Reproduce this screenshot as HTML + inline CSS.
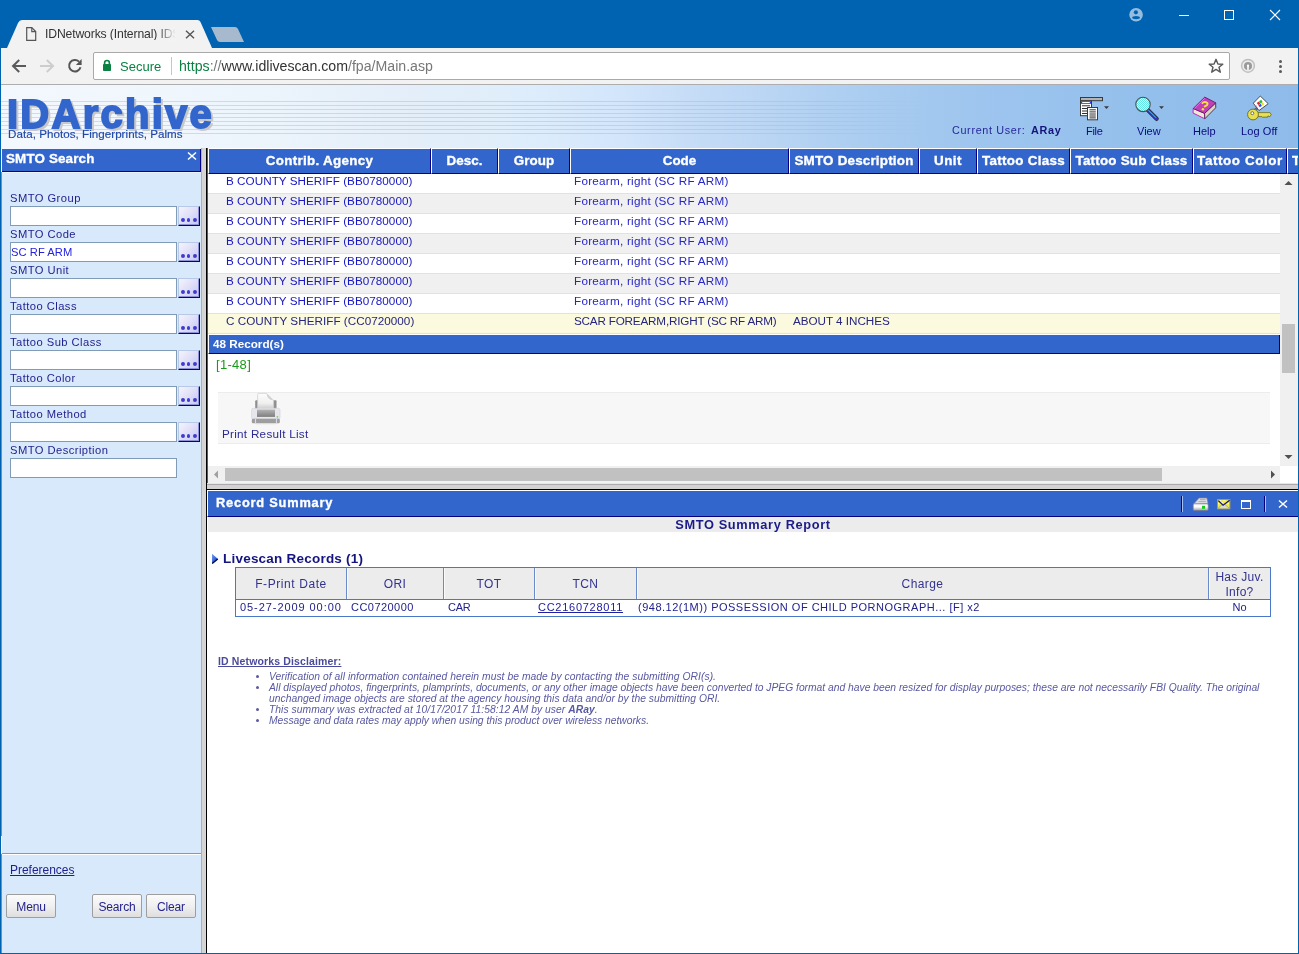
<!DOCTYPE html>
<html><head><meta charset="utf-8">
<style>
*{box-sizing:border-box;margin:0;padding:0}
html,body{width:1299px;height:954px;overflow:hidden;background:#fff;font-family:"Liberation Sans",sans-serif;position:relative}
.a{position:absolute}
.t{position:absolute;white-space:pre;line-height:1;will-change:transform}
svg{position:absolute;overflow:visible}
</style></head><body>
<div class="a" style="left:0px;top:0px;width:1299px;height:48px;background:#0063b1"></div>
<svg style="left:0;top:0" width="260" height="48">
<path d="M7 48 L18 23 Q19.5 20 22 20 L197.5 20 Q199.5 20 200.5 22 L212 48 Z" fill="#f2f2f2"/>
<path d="M211 27 L235 27 Q237 27 238 29 L244 42 L220 42 Q218 42 217 40 Z" fill="#a7b9cc"/>
</svg>
<svg style="left:24px;top:26px" width="16" height="17"><path d="M2.7 1.7 H7.8 L11.7 5.6 V14.3 H2.7 Z" fill="none" stroke="#555" stroke-width="1.2"/><path d="M7.8 1.7 V5.6 H11.7" fill="none" stroke="#555" stroke-width="1.2"/></svg>
<div class="t" style="left:45px;top:27.87px;font-size:12.2px;color:#333;font-weight:normal;font-style:normal;letter-spacing:-0.14px;width:132px;overflow:hidden;">IDNetworks (Internal) IDS</div>
<div class="a" style="left:157px;top:25px;width:22px;height:18px;background:linear-gradient(90deg,rgba(242,242,242,0),#f2f2f2 85%)"></div>
<svg style="left:185px;top:30px" width="10" height="9"><path d="M1 0.8 L9 8.2 M9 0.8 L1 8.2" stroke="#555" stroke-width="1.4"/></svg>
<svg style="left:1128px;top:7px" width="16" height="16"><circle cx="8.06" cy="7.8" r="6.8" fill="#95bde0"/><circle cx="7.9" cy="5.3" r="2.1" fill="#0063b1"/><ellipse cx="8.06" cy="10.6" rx="3.9" ry="1.6" fill="#0063b1"/></svg>
<div class="a" style="left:1179px;top:15px;width:10px;height:1px;background:#fff"></div>
<div class="a" style="left:1224px;top:10px;width:10px;height:10px;border:1px solid #fff"></div>
<svg style="left:1269px;top:9px" width="12" height="12"><path d="M1 1 L11 11 M11 1 L1 11" stroke="#fff" stroke-width="1.1"/></svg>
<div class="a" style="left:0px;top:48px;width:1299px;height:37px;background:#f2f2f2;border-bottom:1px solid #adadad"></div>
<div class="a" style="left:93px;top:52px;width:1137px;height:28px;background:#fff;border:1px solid #a9a9a9;border-radius:2px"></div>
<svg style="left:11px;top:58px" width="16" height="16"><path d="M15 8 H2.5 M8.2 2 L2 8 L8.2 14" fill="none" stroke="#5a5a5a" stroke-width="2"/></svg>
<svg style="left:39px;top:58px" width="16" height="16"><path d="M1 8 H13.5 M7.8 2 L14 8 L7.8 14" fill="none" stroke="#cdcdcd" stroke-width="2"/></svg>
<svg style="left:67px;top:58px" width="16" height="16"><path d="M13.5 9.3 A5.8 5.8 0 1 1 12 3.6" fill="none" stroke="#555" stroke-width="2"/><path d="M14.6 0.9 L14.6 6.9 L8.9 6.9 Z" fill="#555"/></svg>
<svg style="left:102px;top:59px" width="10" height="13"><path d="M2.6 5.5 V3.9 A2.4 2.4 0 0 1 7.4 3.9 V5.5" fill="none" stroke="#0b8043" stroke-width="1.6"/><rect x="1" y="5" width="8" height="7" rx="0.8" fill="#0b8043"/></svg>
<div class="t" style="left:120px;top:60.00px;font-size:13px;color:#0b8043;font-weight:normal;font-style:normal;">Secure</div>
<div class="a" style="left:171px;top:57px;width:1px;height:18px;background:#c6c6c6"></div>
<div class="t" style="left:179px;top:59.02px;font-size:14.15px;color:#333;font-weight:normal;font-style:normal;"><span style="color:#0b8043">https</span><span style="color:#777">://</span>www.idlivescan.com<span style="color:#777">/fpa/Main.asp</span></div>
<svg style="left:1208px;top:58px" width="16" height="16"><path d="M8 1.3 L9.9 6 L14.8 6.2 L11 9.3 L12.3 14.2 L8 11.4 L3.7 14.2 L5 9.3 L1.2 6.2 L6.1 6 Z" fill="none" stroke="#5a5a5a" stroke-width="1.4" stroke-linejoin="round"/></svg>
<svg style="left:1240px;top:58px" width="16" height="16"><circle cx="8" cy="7.85" r="6.4" fill="#ececec" stroke="#bdbdbd" stroke-width="1.4"/><circle cx="8" cy="7.9" r="4" fill="#9a9a9a"/><circle cx="8" cy="7.7" r="1.15" fill="#fff"/><rect x="7.2" y="7.7" width="1.6" height="4.2" fill="#fff"/></svg>
<div class="a" style="left:1279px;top:60px;width:3px;height:3px;border-radius:50%;background:#5a5a5a"></div>
<div class="a" style="left:1279px;top:65px;width:3px;height:3px;border-radius:50%;background:#5a5a5a"></div>
<div class="a" style="left:1279px;top:70px;width:3px;height:3px;border-radius:50%;background:#5a5a5a"></div>
<div class="a" style="left:1px;top:85px;width:1297px;height:64px;background:linear-gradient(90deg,#f3f8fd 0px,#edf5fc 250px,#e3eef9 420px,#e0eefb 500px,#dcecfc 540px,#d2e5fb 620px,#c4dbf6 704px,#a9ccf0 873px,#9cc4ee 1000px,#93bfec 1150px,#8ebbea 1297px)"></div>
<div class="a" style="left:1px;top:101px;width:950px;height:1px;background:linear-gradient(90deg,rgba(140,190,245,0.45) 0px,rgba(140,190,245,0.45) 820px,rgba(140,190,245,0.25) 880px,rgba(140,190,245,0) 930px)"></div>
<div class="a" style="left:1px;top:105px;width:950px;height:1px;background:linear-gradient(90deg,rgba(140,190,245,0.45) 0px,rgba(140,190,245,0.45) 820px,rgba(140,190,245,0.25) 880px,rgba(140,190,245,0) 930px)"></div>
<div class="a" style="left:1px;top:109px;width:950px;height:1px;background:linear-gradient(90deg,rgba(140,190,245,0.45) 0px,rgba(140,190,245,0.45) 820px,rgba(140,190,245,0.25) 880px,rgba(140,190,245,0) 930px)"></div>
<div class="a" style="left:1px;top:113px;width:950px;height:1px;background:linear-gradient(90deg,rgba(140,190,245,0.45) 0px,rgba(140,190,245,0.45) 820px,rgba(140,190,245,0.25) 880px,rgba(140,190,245,0) 930px)"></div>
<div class="a" style="left:1px;top:117px;width:950px;height:1px;background:linear-gradient(90deg,rgba(140,190,245,0.45) 0px,rgba(140,190,245,0.45) 820px,rgba(140,190,245,0.25) 880px,rgba(140,190,245,0) 930px)"></div>
<div class="a" style="left:1px;top:121px;width:950px;height:1px;background:linear-gradient(90deg,rgba(140,190,245,0.45) 0px,rgba(140,190,245,0.45) 820px,rgba(140,190,245,0.25) 880px,rgba(140,190,245,0) 930px)"></div>
<div class="a" style="left:1px;top:125px;width:950px;height:1px;background:linear-gradient(90deg,rgba(140,190,245,0.45) 0px,rgba(140,190,245,0.45) 820px,rgba(140,190,245,0.25) 880px,rgba(140,190,245,0) 930px)"></div>
<div class="a" style="left:1px;top:129px;width:950px;height:1px;background:linear-gradient(90deg,rgba(140,190,245,0.45) 0px,rgba(140,190,245,0.45) 820px,rgba(140,190,245,0.25) 880px,rgba(140,190,245,0) 930px)"></div>
<div class="a" style="left:1px;top:133px;width:950px;height:1px;background:linear-gradient(90deg,rgba(140,190,245,0.45) 0px,rgba(140,190,245,0.45) 820px,rgba(140,190,245,0.25) 880px,rgba(140,190,245,0) 930px)"></div>
<div class="t" style="left:9.2px;top:95.84px;font-size:40px;color:#c8c8c8;font-weight:bold;font-style:normal;letter-spacing:2.25px;-webkit-text-stroke:1.8px #c8c8c8;">IDArchive</div>
<div class="t" style="left:7.2px;top:93.84px;font-size:40px;color:#3366cc;font-weight:bold;font-style:normal;letter-spacing:2.25px;-webkit-text-stroke:1.8px #3366cc;">IDArchive</div>
<div class="t" style="left:8px;top:128.08px;font-size:11.6px;color:#2048a8;font-weight:normal;font-style:normal;letter-spacing:0.04px;-webkit-text-stroke:0.15px #2048a8;">Data, Photos, Fingerprints, Palms</div>
<div class="t" style="left:951.8px;top:125.26px;font-size:10.8px;color:#26269a;font-weight:normal;font-style:normal;letter-spacing:0.66px;">Current User:</div>
<div class="t" style="left:1030.8px;top:125.26px;font-size:10.8px;color:#14147a;font-weight:bold;font-style:normal;letter-spacing:0.7px;">ARay</div>
<div class="t" style="left:1085.5px;top:126.09px;font-size:11px;color:#0a0a80;font-weight:normal;font-style:normal;letter-spacing:-0.3px;">File</div>
<div class="t" style="left:1137.2px;top:126.09px;font-size:11px;color:#0a0a80;font-weight:normal;font-style:normal;">View</div>
<div class="t" style="left:1192.6px;top:126.09px;font-size:11px;color:#0a0a80;font-weight:normal;font-style:normal;">Help</div>
<div class="t" style="left:1240.6px;top:126.09px;font-size:11px;color:#0a0a80;font-weight:normal;font-style:normal;letter-spacing:0.09px;">Log Off</div>
<svg style="left:1080px;top:96px" width="30" height="28">
<rect x="0.5" y="1.5" width="22" height="3.2" fill="#b4b4b4" stroke="#3a3a3a" stroke-width="1"/>
<rect x="0.5" y="4.7" width="11" height="15" fill="#fff" stroke="#3a3a3a" stroke-width="1"/>
<rect x="1" y="5.2" width="10" height="2.6" fill="#3434f0"/>
<rect x="2.2" y="6" width="7.6" height="1" fill="#fff"/>
<path d="M2 9.8 H10 M2 12.5 H10 M2 15 H10 M2 17.5 H10" stroke="#303030" stroke-width="1"/>
<rect x="7.5" y="11.5" width="10" height="12.3" fill="#fff" stroke="#3a3a3a" stroke-width="1"/>
<path d="M9.5 13.8 H15.8 M9.5 15.9 H15.8 M9.5 18 H15.8 M9.5 20 H15.8 M9.5 21.9 H15.8" stroke="#303030" stroke-width="1"/>
<path d="M24 10.3 L29 10.3 L26.5 12.9 Z" fill="#3a3a3a"/>
</svg><svg style="left:1134px;top:96px" width="32" height="28">
<defs><pattern id="chk" width="2" height="2" patternUnits="userSpaceOnUse"><rect width="2" height="2" fill="#e8ffff"/><rect width="1" height="1" fill="#60e8e8"/><rect x="1" y="1" width="1" height="1" fill="#60e8e8"/></pattern></defs>
<path d="M13.6 13.8 L22.6 22.8" stroke="#303048" stroke-width="4.4" stroke-linecap="round"/>
<path d="M13.6 13.8 L22.6 22.8" stroke="#3434e0" stroke-width="2.4" stroke-linecap="round"/>
<path d="M14.5 14.2 L22 21.7" stroke="#40e0f0" stroke-width="0.9"/>
<circle cx="9" cy="8.4" r="7.2" fill="url(#chk)" stroke="#505050" stroke-width="1.1"/>
<path d="M25.1 10.3 L29.9 10.3 L27.5 12.9 Z" fill="#3a3a3a"/>
</svg><svg style="left:1192px;top:96px" width="26" height="25">
<path d="M1.2 12.5 L12.6 17.4 L12.8 22.8 L1 17 Z" fill="#ecead4" stroke="#d020c0" stroke-width="1"/>
<path d="M12.6 17.4 L23.7 6.8 L23.7 11.8 L12.8 22.8 Z" fill="#d8d6c0" stroke="#502050" stroke-width="0.9"/>
<path d="M1.2 12.5 L12.75 1.1 L23.7 6.8 L12.6 17.4 Z" fill="#c040b8" stroke="#6a1a6a" stroke-width="0.9"/>
<path d="M2.5 12.3 L12.75 2.2" stroke="#f070f0" stroke-width="1"/>
<path d="M9.8 7.6 Q12.5 4.8 15.3 7 Q16.3 8.8 13.3 10.2 L12.1 11" fill="none" stroke="#f4e040" stroke-width="1.9"/>
<circle cx="10.9" cy="13.2" r="1.2" fill="#f4e040"/>
</svg><svg style="left:1247px;top:95px" width="26" height="28">
<path d="M13.3 1 L21.2 8.7 L12 15.6 L6.3 8.2 Z" fill="#fff" stroke="#404040" stroke-width="0.9"/>
<g transform="rotate(-35 13.5 8.6)"><rect x="10.8" y="5.9" width="2.6" height="2.6" fill="#e02828"/><rect x="13.6" y="5.9" width="2.6" height="2.6" fill="#20c040"/><rect x="10.8" y="8.7" width="2.6" height="2.6" fill="#2850f0"/><rect x="13.6" y="8.7" width="2.6" height="2.6" fill="#f0e020"/></g>
<path d="M8 12 L9.5 11 M8.6 13 L10 12" stroke="#e03030" stroke-width="0.8"/><path d="M8.8 13.6 L10.3 12.6" stroke="#3050f0" stroke-width="0.8"/>
<path d="M6.5 14.8 Q8.5 12.8 10.5 14.5" fill="none" stroke="#404040" stroke-width="1"/>
<path d="M10.8 17.6 H23 L24.2 19.6 L23 21.6 H22 L21 20.8 L20 22.8 L19 21.6 L18 22.8 L17 21.6 L16 22.8 L15 21.6 H10.8 Z" fill="#e8e050" stroke="#6a6a20" stroke-width="0.8"/>
<circle cx="6" cy="19.5" r="5.4" fill="#e8e050" stroke="#6a6a20" stroke-width="0.9"/>
<circle cx="5.3" cy="18.2" r="1.5" fill="#fff" stroke="#404040" stroke-width="0.7"/>
</svg><div class="a" style="left:1px;top:149px;width:200px;height:804px;background:#d9e9fc"></div>
<div class="a" style="left:1px;top:172px;width:1px;height:664px;background:#8a8a8a"></div>
<div class="a" style="left:1px;top:149px;width:1px;height:23px;background:#ffffff"></div>
<div class="a" style="left:1px;top:836px;width:1px;height:17px;background:#ffffff"></div>
<div class="a" style="left:1px;top:854px;width:1px;height:99px;background:#8a8a8a"></div>
<div class="a" style="left:2px;top:149px;width:199px;height:23px;background:#3366cc;border-right:1px solid #000080;border-bottom:1px solid #000080"></div>
<div class="t" style="left:5.5px;top:151.66px;font-size:13.4px;color:#fff;font-weight:bold;font-style:normal;letter-spacing:0.15px;-webkit-text-stroke:0.35px #fff;">SMTO Search</div>
<svg style="left:187px;top:152px" width="10" height="8"><path d="M1 0.5 L9 7.5 M9 0.5 L1 7.5" stroke="#fff" stroke-width="1.6"/></svg>
<div class="t" style="left:10.2px;top:192.52px;font-size:11.2px;color:#1e1e8c;font-weight:normal;font-style:normal;letter-spacing:0.45px;">SMTO Group</div>
<div class="a" style="left:10px;top:206px;width:167px;height:20px;background:#fff;border:1px solid #7f9db9"></div>
<div class="a" style="left:178px;top:206px;width:22px;height:20px;background:linear-gradient(135deg,#f4f4fc 0%,#dedef8 50%,#c4c4f2 100%);border-right:1px solid #00009a;border-bottom:1px solid #00009a;border-top:1px solid #b8c8e8;border-left:1px solid #b8c8e8;box-shadow:inset -1px -1px 0 #9090d8"></div>
<div class="a" style="left:180.9px;top:217.9px;width:3.8px;height:3.8px;border-radius:50%;background:radial-gradient(circle at 35% 35%,#3c3cd0 50%,#5a5a9a 100%)"></div>
<div class="a" style="left:186.6px;top:217.9px;width:3.8px;height:3.8px;border-radius:50%;background:radial-gradient(circle at 35% 35%,#3c3cd0 50%,#5a5a9a 100%)"></div>
<div class="a" style="left:192.9px;top:217.9px;width:3.8px;height:3.8px;border-radius:50%;background:radial-gradient(circle at 35% 35%,#3c3cd0 50%,#5a5a9a 100%)"></div>
<div class="t" style="left:10.2px;top:228.52px;font-size:11.2px;color:#1e1e8c;font-weight:normal;font-style:normal;letter-spacing:0.45px;">SMTO Code</div>
<div class="a" style="left:10px;top:242px;width:167px;height:20px;background:#fff;border:1px solid #7f9db9"></div>
<div class="a" style="left:178px;top:242px;width:22px;height:20px;background:linear-gradient(135deg,#f4f4fc 0%,#dedef8 50%,#c4c4f2 100%);border-right:1px solid #00009a;border-bottom:1px solid #00009a;border-top:1px solid #b8c8e8;border-left:1px solid #b8c8e8;box-shadow:inset -1px -1px 0 #9090d8"></div>
<div class="a" style="left:180.9px;top:253.9px;width:3.8px;height:3.8px;border-radius:50%;background:radial-gradient(circle at 35% 35%,#3c3cd0 50%,#5a5a9a 100%)"></div>
<div class="a" style="left:186.6px;top:253.9px;width:3.8px;height:3.8px;border-radius:50%;background:radial-gradient(circle at 35% 35%,#3c3cd0 50%,#5a5a9a 100%)"></div>
<div class="a" style="left:192.9px;top:253.9px;width:3.8px;height:3.8px;border-radius:50%;background:radial-gradient(circle at 35% 35%,#3c3cd0 50%,#5a5a9a 100%)"></div>
<div class="t" style="left:10.2px;top:264.52px;font-size:11.2px;color:#1e1e8c;font-weight:normal;font-style:normal;letter-spacing:0.45px;">SMTO Unit</div>
<div class="a" style="left:10px;top:278px;width:167px;height:20px;background:#fff;border:1px solid #7f9db9"></div>
<div class="a" style="left:178px;top:278px;width:22px;height:20px;background:linear-gradient(135deg,#f4f4fc 0%,#dedef8 50%,#c4c4f2 100%);border-right:1px solid #00009a;border-bottom:1px solid #00009a;border-top:1px solid #b8c8e8;border-left:1px solid #b8c8e8;box-shadow:inset -1px -1px 0 #9090d8"></div>
<div class="a" style="left:180.9px;top:289.9px;width:3.8px;height:3.8px;border-radius:50%;background:radial-gradient(circle at 35% 35%,#3c3cd0 50%,#5a5a9a 100%)"></div>
<div class="a" style="left:186.6px;top:289.9px;width:3.8px;height:3.8px;border-radius:50%;background:radial-gradient(circle at 35% 35%,#3c3cd0 50%,#5a5a9a 100%)"></div>
<div class="a" style="left:192.9px;top:289.9px;width:3.8px;height:3.8px;border-radius:50%;background:radial-gradient(circle at 35% 35%,#3c3cd0 50%,#5a5a9a 100%)"></div>
<div class="t" style="left:10.2px;top:300.52px;font-size:11.2px;color:#1e1e8c;font-weight:normal;font-style:normal;letter-spacing:0.45px;">Tattoo Class</div>
<div class="a" style="left:10px;top:314px;width:167px;height:20px;background:#fff;border:1px solid #7f9db9"></div>
<div class="a" style="left:178px;top:314px;width:22px;height:20px;background:linear-gradient(135deg,#f4f4fc 0%,#dedef8 50%,#c4c4f2 100%);border-right:1px solid #00009a;border-bottom:1px solid #00009a;border-top:1px solid #b8c8e8;border-left:1px solid #b8c8e8;box-shadow:inset -1px -1px 0 #9090d8"></div>
<div class="a" style="left:180.9px;top:325.9px;width:3.8px;height:3.8px;border-radius:50%;background:radial-gradient(circle at 35% 35%,#3c3cd0 50%,#5a5a9a 100%)"></div>
<div class="a" style="left:186.6px;top:325.9px;width:3.8px;height:3.8px;border-radius:50%;background:radial-gradient(circle at 35% 35%,#3c3cd0 50%,#5a5a9a 100%)"></div>
<div class="a" style="left:192.9px;top:325.9px;width:3.8px;height:3.8px;border-radius:50%;background:radial-gradient(circle at 35% 35%,#3c3cd0 50%,#5a5a9a 100%)"></div>
<div class="t" style="left:10.2px;top:336.52px;font-size:11.2px;color:#1e1e8c;font-weight:normal;font-style:normal;letter-spacing:0.45px;">Tattoo Sub Class</div>
<div class="a" style="left:10px;top:350px;width:167px;height:20px;background:#fff;border:1px solid #7f9db9"></div>
<div class="a" style="left:178px;top:350px;width:22px;height:20px;background:linear-gradient(135deg,#f4f4fc 0%,#dedef8 50%,#c4c4f2 100%);border-right:1px solid #00009a;border-bottom:1px solid #00009a;border-top:1px solid #b8c8e8;border-left:1px solid #b8c8e8;box-shadow:inset -1px -1px 0 #9090d8"></div>
<div class="a" style="left:180.9px;top:361.9px;width:3.8px;height:3.8px;border-radius:50%;background:radial-gradient(circle at 35% 35%,#3c3cd0 50%,#5a5a9a 100%)"></div>
<div class="a" style="left:186.6px;top:361.9px;width:3.8px;height:3.8px;border-radius:50%;background:radial-gradient(circle at 35% 35%,#3c3cd0 50%,#5a5a9a 100%)"></div>
<div class="a" style="left:192.9px;top:361.9px;width:3.8px;height:3.8px;border-radius:50%;background:radial-gradient(circle at 35% 35%,#3c3cd0 50%,#5a5a9a 100%)"></div>
<div class="t" style="left:10.2px;top:372.52px;font-size:11.2px;color:#1e1e8c;font-weight:normal;font-style:normal;letter-spacing:0.45px;">Tattoo Color</div>
<div class="a" style="left:10px;top:386px;width:167px;height:20px;background:#fff;border:1px solid #7f9db9"></div>
<div class="a" style="left:178px;top:386px;width:22px;height:20px;background:linear-gradient(135deg,#f4f4fc 0%,#dedef8 50%,#c4c4f2 100%);border-right:1px solid #00009a;border-bottom:1px solid #00009a;border-top:1px solid #b8c8e8;border-left:1px solid #b8c8e8;box-shadow:inset -1px -1px 0 #9090d8"></div>
<div class="a" style="left:180.9px;top:397.9px;width:3.8px;height:3.8px;border-radius:50%;background:radial-gradient(circle at 35% 35%,#3c3cd0 50%,#5a5a9a 100%)"></div>
<div class="a" style="left:186.6px;top:397.9px;width:3.8px;height:3.8px;border-radius:50%;background:radial-gradient(circle at 35% 35%,#3c3cd0 50%,#5a5a9a 100%)"></div>
<div class="a" style="left:192.9px;top:397.9px;width:3.8px;height:3.8px;border-radius:50%;background:radial-gradient(circle at 35% 35%,#3c3cd0 50%,#5a5a9a 100%)"></div>
<div class="t" style="left:10.2px;top:408.52px;font-size:11.2px;color:#1e1e8c;font-weight:normal;font-style:normal;letter-spacing:0.45px;">Tattoo Method</div>
<div class="a" style="left:10px;top:422px;width:167px;height:20px;background:#fff;border:1px solid #7f9db9"></div>
<div class="a" style="left:178px;top:422px;width:22px;height:20px;background:linear-gradient(135deg,#f4f4fc 0%,#dedef8 50%,#c4c4f2 100%);border-right:1px solid #00009a;border-bottom:1px solid #00009a;border-top:1px solid #b8c8e8;border-left:1px solid #b8c8e8;box-shadow:inset -1px -1px 0 #9090d8"></div>
<div class="a" style="left:180.9px;top:433.9px;width:3.8px;height:3.8px;border-radius:50%;background:radial-gradient(circle at 35% 35%,#3c3cd0 50%,#5a5a9a 100%)"></div>
<div class="a" style="left:186.6px;top:433.9px;width:3.8px;height:3.8px;border-radius:50%;background:radial-gradient(circle at 35% 35%,#3c3cd0 50%,#5a5a9a 100%)"></div>
<div class="a" style="left:192.9px;top:433.9px;width:3.8px;height:3.8px;border-radius:50%;background:radial-gradient(circle at 35% 35%,#3c3cd0 50%,#5a5a9a 100%)"></div>
<div class="t" style="left:10.2px;top:444.52px;font-size:11.2px;color:#1e1e8c;font-weight:normal;font-style:normal;letter-spacing:0.45px;">SMTO Description</div>
<div class="a" style="left:10px;top:458px;width:167px;height:20px;background:#fff;border:1px solid #7f9db9"></div>
<div class="t" style="left:11.3px;top:247.22px;font-size:11.2px;color:#2424dc;font-weight:normal;font-style:normal;letter-spacing:0.05px;">SC RF ARM</div>
<div class="a" style="left:2px;top:853px;width:199px;height:1px;background:#6b9fd6"></div>
<div class="a" style="left:2px;top:854px;width:199px;height:1px;background:#ffffff"></div>
<div class="t" style="left:10px;top:864.14px;font-size:12px;color:#1e1e8c;font-weight:normal;font-style:normal;letter-spacing:-0.03px;text-decoration:underline;">Preferences</div>
<div class="a" style="left:6px;top:894px;width:50px;height:24px;background:linear-gradient(180deg,#fbfbfb 0%,#f0f0f0 50%,#dedede 100%);border:1px solid #9e9e9e;border-radius:2px"></div>
<div class="t" style="left:6px;width:50px;text-align:center;top:900.94px;font-size:12px;color:#23238c;font-weight:normal;font-style:normal;letter-spacing:-0.18px;">Menu</div>
<div class="a" style="left:92px;top:894px;width:50px;height:24px;background:linear-gradient(180deg,#fbfbfb 0%,#f0f0f0 50%,#dedede 100%);border:1px solid #9e9e9e;border-radius:2px"></div>
<div class="t" style="left:92px;width:50px;text-align:center;top:900.94px;font-size:12px;color:#23238c;font-weight:normal;font-style:normal;letter-spacing:-0.18px;">Search</div>
<div class="a" style="left:146px;top:894px;width:50px;height:24px;background:linear-gradient(180deg,#fbfbfb 0%,#f0f0f0 50%,#dedede 100%);border:1px solid #9e9e9e;border-radius:2px"></div>
<div class="t" style="left:146px;width:50px;text-align:center;top:900.94px;font-size:12px;color:#23238c;font-weight:normal;font-style:normal;letter-spacing:-0.18px;">Clear</div>
<div class="a" style="left:201px;top:148px;width:5px;height:805px;background:linear-gradient(90deg,#b0b0b0 0,#b0b0b0 1px,#d4d4d4 1px,#d4d4d4 4px,#dadada 5px)"></div>
<div class="a" style="left:206px;top:148px;width:1px;height:805px;background:#000"></div>
<div class="a" style="left:2px;top:172px;width:199px;height:1px;background:#edf3fc"></div>
<div class="a" style="left:208px;top:148px;width:1090px;height:341px;background:#fff"></div>
<div class="a" style="left:207px;top:148px;width:1px;height:341px;background:#5a5a5a"></div>
<div class="a" style="left:208px;top:148px;width:1090px;height:1px;background:#fff"></div>
<div class="a" style="left:208px;top:148px;width:223px;height:26px;background:#3366cc;border-left:1px solid #fff;border-top:1px solid #fff;border-right:1px solid #000080;border-bottom:1px solid #000080"></div>
<div class="t" style="left:209px;width:221px;text-align:center;top:153.66px;font-size:13.4px;color:#fff;font-weight:bold;font-style:normal;letter-spacing:0.3px;-webkit-text-stroke:0.35px #fff;">Contrib. Agency</div>
<div class="a" style="left:431px;top:148px;width:67px;height:26px;background:#3366cc;border-left:1px solid #fff;border-top:1px solid #fff;border-right:1px solid #000080;border-bottom:1px solid #000080"></div>
<div class="t" style="left:432px;width:65px;text-align:center;top:153.66px;font-size:13.4px;color:#fff;font-weight:bold;font-style:normal;letter-spacing:0.07px;-webkit-text-stroke:0.35px #fff;">Desc.</div>
<div class="a" style="left:498px;top:148px;width:72px;height:26px;background:#3366cc;border-left:1px solid #fff;border-top:1px solid #fff;border-right:1px solid #000080;border-bottom:1px solid #000080"></div>
<div class="t" style="left:499px;width:70px;text-align:center;top:153.66px;font-size:13.4px;color:#fff;font-weight:bold;font-style:normal;letter-spacing:0.09px;-webkit-text-stroke:0.35px #fff;">Group</div>
<div class="a" style="left:570px;top:148px;width:219px;height:26px;background:#3366cc;border-left:1px solid #fff;border-top:1px solid #fff;border-right:1px solid #000080;border-bottom:1px solid #000080"></div>
<div class="t" style="left:571px;width:217px;text-align:center;top:153.66px;font-size:13.4px;color:#fff;font-weight:bold;font-style:normal;-webkit-text-stroke:0.35px #fff;">Code</div>
<div class="a" style="left:789px;top:148px;width:130px;height:26px;background:#3366cc;border-left:1px solid #fff;border-top:1px solid #fff;border-right:1px solid #000080;border-bottom:1px solid #000080"></div>
<div class="t" style="left:790px;width:128px;text-align:center;top:153.66px;font-size:13.4px;color:#fff;font-weight:bold;font-style:normal;letter-spacing:0.2px;-webkit-text-stroke:0.35px #fff;">SMTO Description</div>
<div class="a" style="left:919px;top:148px;width:58px;height:26px;background:#3366cc;border-left:1px solid #fff;border-top:1px solid #fff;border-right:1px solid #000080;border-bottom:1px solid #000080"></div>
<div class="t" style="left:920px;width:56px;text-align:center;top:153.66px;font-size:13.4px;color:#fff;font-weight:bold;font-style:normal;letter-spacing:0.47px;-webkit-text-stroke:0.35px #fff;">Unit</div>
<div class="a" style="left:977px;top:148px;width:93px;height:26px;background:#3366cc;border-left:1px solid #fff;border-top:1px solid #fff;border-right:1px solid #000080;border-bottom:1px solid #000080"></div>
<div class="t" style="left:978px;width:91px;text-align:center;top:153.66px;font-size:13.4px;color:#fff;font-weight:bold;font-style:normal;letter-spacing:0.3px;-webkit-text-stroke:0.35px #fff;">Tattoo Class</div>
<div class="a" style="left:1070px;top:148px;width:123px;height:26px;background:#3366cc;border-left:1px solid #fff;border-top:1px solid #fff;border-right:1px solid #000080;border-bottom:1px solid #000080"></div>
<div class="t" style="left:1071px;width:121px;text-align:center;top:153.66px;font-size:13.4px;color:#fff;font-weight:bold;font-style:normal;letter-spacing:0.23px;-webkit-text-stroke:0.35px #fff;">Tattoo Sub Class</div>
<div class="a" style="left:1193px;top:148px;width:94px;height:26px;background:#3366cc;border-left:1px solid #fff;border-top:1px solid #fff;border-right:1px solid #000080;border-bottom:1px solid #000080"></div>
<div class="t" style="left:1194px;width:92px;text-align:center;top:153.66px;font-size:13.4px;color:#fff;font-weight:bold;font-style:normal;letter-spacing:0.6px;-webkit-text-stroke:0.35px #fff;">Tattoo Color</div>
<div class="a" style="left:1287px;top:148px;width:11px;height:26px;background:#3366cc;border-left:1px solid #fff;border-top:1px solid #fff;border-bottom:1px solid #000080"></div>
<div class="t" style="left:1292px;top:153.66px;font-size:13.4px;color:#fff;font-weight:bold;font-style:normal;width:6px;overflow:hidden;-webkit-text-stroke:0.35px #fff;">T</div>
<div class="a" style="left:208px;top:174px;width:1072px;height:19px;background:#ffffff"></div>
<div class="a" style="left:208px;top:193px;width:1072px;height:1px;background:#dedefa"></div>
<div class="t" style="left:226.3px;top:175.10px;font-size:11.7px;color:#1818c0;font-weight:normal;font-style:normal;letter-spacing:0.03px;">B COUNTY SHERIFF (BB0780000)</div>
<div class="t" style="left:574px;top:175.10px;font-size:11.7px;color:#2626c8;font-weight:normal;font-style:normal;letter-spacing:0.25px;">Forearm, right (SC RF ARM)</div>
<div class="a" style="left:208px;top:194px;width:1072px;height:19px;background:#f0f0f0"></div>
<div class="a" style="left:208px;top:213px;width:1072px;height:1px;background:#dedefa"></div>
<div class="t" style="left:226.3px;top:195.10px;font-size:11.7px;color:#1818c0;font-weight:normal;font-style:normal;letter-spacing:0.03px;">B COUNTY SHERIFF (BB0780000)</div>
<div class="t" style="left:574px;top:195.10px;font-size:11.7px;color:#2626c8;font-weight:normal;font-style:normal;letter-spacing:0.25px;">Forearm, right (SC RF ARM)</div>
<div class="a" style="left:208px;top:214px;width:1072px;height:19px;background:#ffffff"></div>
<div class="a" style="left:208px;top:233px;width:1072px;height:1px;background:#dedefa"></div>
<div class="t" style="left:226.3px;top:215.10px;font-size:11.7px;color:#1818c0;font-weight:normal;font-style:normal;letter-spacing:0.03px;">B COUNTY SHERIFF (BB0780000)</div>
<div class="t" style="left:574px;top:215.10px;font-size:11.7px;color:#2626c8;font-weight:normal;font-style:normal;letter-spacing:0.25px;">Forearm, right (SC RF ARM)</div>
<div class="a" style="left:208px;top:234px;width:1072px;height:19px;background:#f0f0f0"></div>
<div class="a" style="left:208px;top:253px;width:1072px;height:1px;background:#dedefa"></div>
<div class="t" style="left:226.3px;top:235.10px;font-size:11.7px;color:#1818c0;font-weight:normal;font-style:normal;letter-spacing:0.03px;">B COUNTY SHERIFF (BB0780000)</div>
<div class="t" style="left:574px;top:235.10px;font-size:11.7px;color:#2626c8;font-weight:normal;font-style:normal;letter-spacing:0.25px;">Forearm, right (SC RF ARM)</div>
<div class="a" style="left:208px;top:254px;width:1072px;height:19px;background:#ffffff"></div>
<div class="a" style="left:208px;top:273px;width:1072px;height:1px;background:#dedefa"></div>
<div class="t" style="left:226.3px;top:255.10px;font-size:11.7px;color:#1818c0;font-weight:normal;font-style:normal;letter-spacing:0.03px;">B COUNTY SHERIFF (BB0780000)</div>
<div class="t" style="left:574px;top:255.10px;font-size:11.7px;color:#2626c8;font-weight:normal;font-style:normal;letter-spacing:0.25px;">Forearm, right (SC RF ARM)</div>
<div class="a" style="left:208px;top:274px;width:1072px;height:19px;background:#f0f0f0"></div>
<div class="a" style="left:208px;top:293px;width:1072px;height:1px;background:#dedefa"></div>
<div class="t" style="left:226.3px;top:275.10px;font-size:11.7px;color:#1818c0;font-weight:normal;font-style:normal;letter-spacing:0.03px;">B COUNTY SHERIFF (BB0780000)</div>
<div class="t" style="left:574px;top:275.10px;font-size:11.7px;color:#2626c8;font-weight:normal;font-style:normal;letter-spacing:0.25px;">Forearm, right (SC RF ARM)</div>
<div class="a" style="left:208px;top:294px;width:1072px;height:19px;background:#ffffff"></div>
<div class="a" style="left:208px;top:313px;width:1072px;height:1px;background:#dedefa"></div>
<div class="t" style="left:226.3px;top:295.10px;font-size:11.7px;color:#1818c0;font-weight:normal;font-style:normal;letter-spacing:0.03px;">B COUNTY SHERIFF (BB0780000)</div>
<div class="t" style="left:574px;top:295.10px;font-size:11.7px;color:#2626c8;font-weight:normal;font-style:normal;letter-spacing:0.25px;">Forearm, right (SC RF ARM)</div>
<div class="a" style="left:208px;top:314px;width:1072px;height:19px;background:#fbf9de"></div>
<div class="a" style="left:208px;top:333px;width:1072px;height:1px;background:#dedefa"></div>
<div class="t" style="left:226.3px;top:315.10px;font-size:11.7px;color:#262680;font-weight:normal;font-style:normal;letter-spacing:0.03px;">C COUNTY SHERIFF (CC0720000)</div>
<div class="t" style="left:574px;top:315.10px;font-size:11.7px;color:#262680;font-weight:normal;font-style:normal;letter-spacing:-0.19px;">SCAR FOREARM,RIGHT (SC RF ARM)</div>
<div class="t" style="left:792.5px;top:315.10px;font-size:11.7px;color:#262680;font-weight:normal;font-style:normal;letter-spacing:-0.03px;">ABOUT 4 INCHES</div>
<div class="a" style="left:208px;top:335px;width:1072px;height:19px;background:#3366cc;border-bottom:1px solid #000080;border-right:1px solid #000080;border-left:1px solid #fff"></div>
<div class="t" style="left:213px;top:337.90px;font-size:11.7px;color:#fff;font-weight:bold;font-style:normal;">48 Record(s)</div>
<div class="t" style="left:216px;top:357.60px;font-size:13px;color:#1a9a1a;font-weight:normal;font-style:normal;letter-spacing:0.3px;">[1-48]</div>
<div class="a" style="left:218px;top:392px;width:1052px;height:52px;background:#f7f7f7;border-top:1px solid #ececec;border-bottom:1px solid #ececec"></div>
<svg style="left:245px;top:390px" width="45" height="38">
<defs>
<linearGradient id="pp" x1="0" y1="0" x2="0" y2="1"><stop offset="0" stop-color="#fcfcfc"/><stop offset="0.6" stop-color="#f0f0f0"/><stop offset="1" stop-color="#c8c8c8"/></linearGradient>
<linearGradient id="ps" x1="0" y1="0" x2="0" y2="1"><stop offset="0" stop-color="#b4b4b4"/><stop offset="1" stop-color="#7e7e7e"/></linearGradient>
</defs>
<rect x="10.2" y="10.2" width="21.3" height="9.5" rx="1" fill="#8e8e8e"/>
<path d="M12.6 4.6 Q12.6 3.4 13.8 3.4 H21.6 L28.6 10.4 V19.6 H12.6 Z" fill="url(#pp)" stroke="#cfcfcf" stroke-width="0.7"/>
<path d="M21.6 3.4 Q22 9.5 28.6 10.4 Z" fill="#d0d0d0"/>
<rect x="6.6" y="18.3" width="28.4" height="10.8" rx="1.6" fill="#e6e6ec" stroke="#d0d0d6" stroke-width="0.6"/>
<rect x="12" y="19.6" width="18" height="7.3" fill="url(#ps)"/>
<rect x="6.8" y="28.8" width="28" height="4.4" rx="1.2" fill="#9e9e9e"/>
<path d="M10.5 29 V32.5 Q10.5 33.6 11.6 33.6 H30.4 Q31.5 33.6 31.5 32.5 V29" fill="none" stroke="#dcdce0" stroke-width="1.1"/>
<circle cx="32.4" cy="26.8" r="0.9" fill="#74d074"/>
</svg><div class="t" style="left:222.3px;top:427.80px;font-size:11.7px;color:#2a2a96;font-weight:normal;font-style:normal;letter-spacing:0.27px;">Print Result List</div>
<div class="a" style="left:1280px;top:174px;width:18px;height:292px;background:#f0f0f0"></div>
<svg style="left:1284px;top:180px" width="9" height="6"><path d="M0.5 5 L4.5 1 L8.5 5 Z" fill="#505050"/></svg>
<div class="a" style="left:1282px;top:324px;width:13px;height:49px;background:#c1c1c1"></div>
<svg style="left:1284px;top:454px" width="9" height="6"><path d="M0.5 1 L4.5 5 L8.5 1 Z" fill="#505050"/></svg>
<div class="a" style="left:208px;top:466px;width:1072px;height:17px;background:#f0f0f0"></div>
<svg style="left:213px;top:470px" width="6" height="9"><path d="M5 0.5 L1 4.5 L5 8.5 Z" fill="#a0a0a0"/></svg>
<div class="a" style="left:225px;top:468px;width:937px;height:13px;background:#c1c1c1"></div>
<svg style="left:1270px;top:470px" width="6" height="9"><path d="M1 0.5 L5 4.5 L1 8.5 Z" fill="#505050"/></svg>
<div class="a" style="left:1280px;top:466px;width:18px;height:17px;background:#fff"></div>
<div class="a" style="left:207px;top:483px;width:1091px;height:1px;background:#e6e6e6"></div>
<div class="a" style="left:207px;top:484px;width:1091px;height:1px;background:#ababab"></div>
<div class="a" style="left:207px;top:485px;width:1091px;height:4px;background:#d2d2d2"></div>
<div class="a" style="left:207px;top:489px;width:1091px;height:1px;background:#000"></div>
<div class="a" style="left:207px;top:490px;width:1091px;height:463px;background:#fff"></div>
<div class="a" style="left:207px;top:490px;width:1091px;height:27px;background:#3366cc;border-left:1px solid #fff;border-top:1px solid #fff;border-bottom:1px solid #000080"></div>
<div class="t" style="left:216px;top:497.06px;font-size:12.8px;color:#fff;font-weight:bold;font-style:normal;letter-spacing:0.8px;-webkit-text-stroke:0.35px #fff;">Record Summary</div>
<div class="a" style="left:1181px;top:496px;width:1px;height:16px;background:#000080"></div>
<div class="a" style="left:1182px;top:496px;width:1px;height:16px;background:#a8c0f0"></div>
<div class="a" style="left:1264px;top:496px;width:1px;height:16px;background:#000080"></div>
<div class="a" style="left:1265px;top:496px;width:1px;height:16px;background:#a8c0f0"></div>
<svg style="left:1192px;top:497px" width="17" height="15">
<defs><linearGradient id="pb" x1="0" y1="0" x2="0" y2="1"><stop offset="0" stop-color="#f4f4fa"/><stop offset="0.45" stop-color="#ffffff"/><stop offset="1" stop-color="#9a9aa8"/></linearGradient></defs>
<path d="M7.1 1.1 H14.8 L16 6.6 L1.5 7.2 Z" fill="#dcdce4" stroke="#8a8a98" stroke-width="0.7"/>
<path d="M8 2.6 H13.5 M6.5 4.6 H13.8" stroke="#a0a0b0" stroke-width="0.8"/>
<rect x="1.2" y="6.8" width="15" height="6.8" rx="1.2" fill="url(#pb)" stroke="#7a7a88" stroke-width="0.7"/>
<rect x="10" y="8.8" width="3" height="3" fill="#10d010"/>
</svg>
<svg style="left:1217px;top:499px" width="14" height="11">
<rect x="0.5" y="0.5" width="12.4" height="9.3" fill="#f2ec48" stroke="#a09a78" stroke-width="1"/>
<path d="M1 9.3 L5.2 5.4 L6.1 6.2 L7.6 5.2 L12.4 9.3 Z" fill="#dcdad0"/>
<path d="M1 9.3 L5 5.6 M12.4 9.3 L8 5.6" stroke="#b8b050" stroke-width="0.9"/>
<circle cx="3.5" cy="1.6" r="0.6" fill="#fffff0"/><circle cx="7" cy="1.6" r="0.6" fill="#fffff0"/><circle cx="5.3" cy="3.4" r="0.6" fill="#fffff0"/><circle cx="9.2" cy="3" r="0.6" fill="#fffff0"/><circle cx="1.6" cy="4.6" r="0.6" fill="#fffff0"/><circle cx="11.4" cy="4.6" r="0.6" fill="#fffff0"/>
<path d="M1.3 1.6 L6.1 6.3 L12.6 1.2" fill="none" stroke="#101070" stroke-width="1.2"/>
</svg><div class="a" style="left:1241px;top:500px;width:10px;height:9px;border:1px solid #fff;border-top-width:2px"></div>
<svg style="left:1278px;top:500px" width="10" height="8"><path d="M1 0.5 L9 7.5 M9 0.5 L1 7.5" stroke="#fff" stroke-width="1.5"/></svg>
<div class="a" style="left:208px;top:517px;width:1090px;height:15px;background:#ececec"></div>
<div class="t" style="left:208px;width:1090px;text-align:center;top:518.56px;font-size:12.8px;color:#1a1a8a;font-weight:bold;font-style:normal;letter-spacing:0.64px;">SMTO Summary Report</div>
<svg style="left:211px;top:553px" width="8" height="12"><defs><linearGradient id="g1" x1="0" y1="0" x2="1" y2="1"><stop offset="0" stop-color="#7aa2e8"/><stop offset="0.6" stop-color="#2a5ad8"/><stop offset="1" stop-color="#1a3aa0"/></linearGradient></defs><path d="M1 0.8 L7 5.9 L1 11 Z" fill="url(#g1)"/><path d="M1.2 10.6 L6.8 5.9" stroke="#0a0a30" stroke-width="1.3"/></svg>
<div class="t" style="left:223px;top:551.57px;font-size:13.5px;color:#141480;font-weight:bold;font-style:normal;letter-spacing:0.22px;">Livescan Records (1)</div>
<div class="a" style="left:235px;top:567px;width:1036px;height:50px;border:1px solid #4a78c8;background:#fff"></div>
<div class="a" style="left:236px;top:568px;width:1034px;height:31px;background:#ececec"></div>
<div class="a" style="left:236px;top:599px;width:1034px;height:1px;background:#4a78c8"></div>
<div class="a" style="left:346px;top:568px;width:1px;height:31px;background:#6a8ac8"></div>
<div class="a" style="left:347px;top:568px;width:1px;height:31px;background:#fafafa"></div>
<div class="a" style="left:443px;top:568px;width:1px;height:31px;background:#6a8ac8"></div>
<div class="a" style="left:444px;top:568px;width:1px;height:31px;background:#fafafa"></div>
<div class="a" style="left:534px;top:568px;width:1px;height:31px;background:#6a8ac8"></div>
<div class="a" style="left:535px;top:568px;width:1px;height:31px;background:#fafafa"></div>
<div class="a" style="left:636px;top:568px;width:1px;height:31px;background:#6a8ac8"></div>
<div class="a" style="left:637px;top:568px;width:1px;height:31px;background:#fafafa"></div>
<div class="a" style="left:1208px;top:568px;width:1px;height:31px;background:#6a8ac8"></div>
<div class="a" style="left:1209px;top:568px;width:1px;height:31px;background:#fafafa"></div>
<div class="t" style="left:236px;width:110px;text-align:center;top:577.84px;font-size:12px;color:#33338f;font-weight:normal;font-style:normal;letter-spacing:0.58px;">F-Print Date</div>
<div class="t" style="left:347px;width:96px;text-align:center;top:577.84px;font-size:12px;color:#33338f;font-weight:normal;font-style:normal;letter-spacing:0.4px;">ORI</div>
<div class="t" style="left:444px;width:90px;text-align:center;top:577.84px;font-size:12px;color:#33338f;font-weight:normal;font-style:normal;letter-spacing:0.4px;">TOT</div>
<div class="t" style="left:535px;width:101px;text-align:center;top:577.84px;font-size:12px;color:#33338f;font-weight:normal;font-style:normal;letter-spacing:0.4px;">TCN</div>
<div class="t" style="left:637px;width:571px;text-align:center;top:577.84px;font-size:12px;color:#33338f;font-weight:normal;font-style:normal;letter-spacing:0.4px;">Charge</div>
<div class="t" style="left:1209px;width:61px;text-align:center;top:571.34px;font-size:12px;color:#33338f;font-weight:normal;font-style:normal;letter-spacing:0.3px;">Has Juv.</div>
<div class="t" style="left:1209px;width:61px;text-align:center;top:585.54px;font-size:12px;color:#33338f;font-weight:normal;font-style:normal;letter-spacing:0.3px;">Info?</div>
<div class="t" style="left:239.8px;top:602.29px;font-size:11px;color:#22228c;font-weight:normal;font-style:normal;letter-spacing:0.93px;">05-27-2009 00:00</div>
<div class="t" style="left:351px;top:602.29px;font-size:11px;color:#22228c;font-weight:normal;font-style:normal;letter-spacing:0.46px;">CC0720000</div>
<div class="t" style="left:447.7px;top:602.29px;font-size:11px;color:#22228c;font-weight:normal;font-style:normal;letter-spacing:-0.3px;">CAR</div>
<div class="t" style="left:538.3px;top:602.29px;font-size:11px;color:#2020a0;font-weight:normal;font-style:normal;letter-spacing:0.73px;text-decoration:underline;">CC2160728011</div>
<div class="t" style="left:638px;top:602.29px;font-size:11px;color:#22228c;font-weight:normal;font-style:normal;letter-spacing:0.5px;">(948.12(1M)) POSSESSION OF CHILD PORNOGRAPH... [F] x2</div>
<div class="t" style="left:1209px;width:61px;text-align:center;top:602.29px;font-size:11px;color:#22228c;font-weight:normal;font-style:normal;">No</div>
<div class="t" style="left:218.3px;top:656.31px;font-size:10.5px;color:#4a4a9c;font-weight:bold;font-style:normal;letter-spacing:0.14px;text-decoration:underline;">ID Networks Disclaimer:</div>
<div class="a" style="left:255.5px;top:675.2px;width:3px;height:3px;border-radius:50%;background:#5a5aa0"></div>
<div class="t" style="left:269.2px;top:672.28px;font-size:10.3px;color:#5858a2;font-weight:normal;font-style:italic;letter-spacing:0.045px;">Verification of all information contained herein must be made by contacting the submitting ORI(s).</div>
<div class="a" style="left:255.5px;top:686.1px;width:3px;height:3px;border-radius:50%;background:#5a5aa0"></div>
<div class="t" style="left:269.2px;top:683.18px;font-size:10.3px;color:#5858a2;font-weight:normal;font-style:italic;letter-spacing:-0.006px;">All displayed photos, fingerprints, plamprints, documents, or any other image objects have been converted to JPEG format and have been resized for display purposes; these are not necessarily FBI Quality. The original</div>
<div class="t" style="left:269.2px;top:694.08px;font-size:10.3px;color:#5858a2;font-weight:normal;font-style:italic;letter-spacing:0.025px;">unchanged image objects are stored at the agency housing this data and/or by the submitting ORI.</div>
<div class="a" style="left:255.5px;top:707.9px;width:3px;height:3px;border-radius:50%;background:#5a5aa0"></div>
<div class="t" style="left:269.2px;top:704.98px;font-size:10.3px;color:#5858a2;font-weight:normal;font-style:italic;letter-spacing:0.045px;">This summary was extracted at 10/17/2017 11:58:12 AM by user <b>ARay</b>.</div>
<div class="a" style="left:255.5px;top:718.8px;width:3px;height:3px;border-radius:50%;background:#5a5aa0"></div>
<div class="t" style="left:269.2px;top:715.88px;font-size:10.3px;color:#5858a2;font-weight:normal;font-style:italic;letter-spacing:-0.015px;">Message and data rates may apply when using this product over wireless networks.</div>
<div class="a" style="left:0px;top:0px;width:1px;height:954px;background:#0063b1"></div>
<div class="a" style="left:1298px;top:0px;width:1px;height:954px;background:#0063b1"></div>
<div class="a" style="left:0px;top:953px;width:1299px;height:1px;background:#0063b1"></div>
</body></html>
